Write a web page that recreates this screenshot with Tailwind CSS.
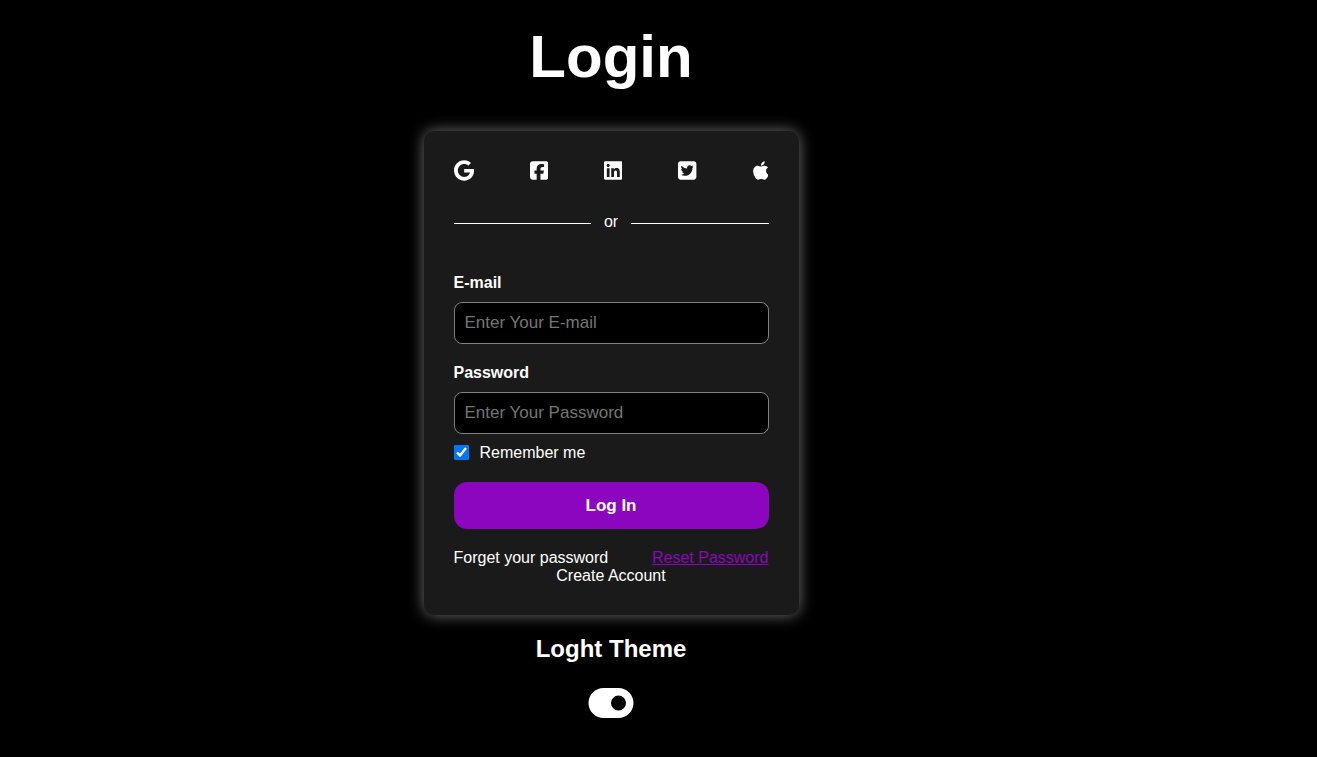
<!DOCTYPE html>
<html lang="en">
<head>
<meta charset="UTF-8">
<meta name="viewport" content="width=device-width, initial-scale=1">
<title>Login</title>
<script src="https://cdn.jsdelivr.net/npm/@tailwindcss/browser@4"></script>
</head>
<body class="min-h-screen bg-black font-['Liberation_Sans',Arial,sans-serif] text-base leading-[18px] text-white">
<main class="flex flex-col items-center pt-[23px] md:pr-[95px]">
  <h1 class="text-[60px] leading-[68px] font-bold">Login</h1>

  <form class="mt-10 w-full max-w-[375px] rounded-[10px] bg-[#1a1a1a] px-[30px] pt-[29px] pb-[30px] shadow-[0_0_15px_#707070]">
    <div class="flex items-center justify-between">
      <a href="#" aria-label="Google"><svg class="h-[21px] w-auto" viewBox="0 0 488 512" fill="currentColor"><path d="M488 261.8C488 403.3 391.1 504 248 504 110.8 504 0 393.2 0 256S110.8 8 248 8c66.8 0 123 24.5 166.3 64.9l-67.5 64.9C258.5 52.6 94.3 116.6 94.3 256c0 86.5 69.1 156.6 153.7 156.6 98.2 0 135-70.4 140.8-106.9H248v-85.3h236.1c2.3 12.7 3.9 24.9 3.9 41.4z"/></svg></a>
      <a href="#" aria-label="Facebook"><svg class="h-[21px] w-auto" viewBox="0 0 448 512" fill="currentColor"><path d="M64 32C28.7 32 0 60.7 0 96V416c0 35.3 28.7 64 64 64h98.2V334.2H109.4V256h52.8V222.3c0-87.1 39.4-127.5 125-127.5c16.2 0 44.2 3.2 55.7 6.4V172c-6-.6-16.5-1-29.6-1c-42 0-58.2 15.9-58.2 57.2V256h83.6l-14.4 78.2H255V480H384c35.3 0 64-28.7 64-64V96c0-35.3-28.7-64-64-64H64z"/></svg></a>
      <a href="#" aria-label="LinkedIn"><svg class="h-[21px] w-auto" viewBox="0 0 448 512" fill="currentColor"><path d="M416 32H31.9C14.3 32 0 46.5 0 64.3v383.4C0 465.5 14.3 480 31.9 480H416c17.6 0 32-14.5 32-32.3V64.3c0-17.8-14.4-32.3-32-32.3zM135.4 416H69V202.2h66.5V416zm-33.2-243c-21.3 0-38.5-17.3-38.5-38.5S80.9 96 102.2 96c21.2 0 38.5 17.3 38.5 38.5 0 21.3-17.2 38.5-38.5 38.5zm282.1 243h-66.4V312c0-24.8-.5-56.7-34.5-56.7-34.6 0-39.9 27-39.9 54.9V416h-66.4V202.2h63.7v29.2h.9c8.9-16.8 30.6-34.5 62.9-34.5 67.2 0 79.7 44.3 79.7 101.9V416z"/></svg></a>
      <a href="#" aria-label="Twitter"><svg class="h-[21px] w-auto" viewBox="0 0 448 512" fill="currentColor"><path d="M64 32C28.7 32 0 60.7 0 96V416c0 35.3 28.7 64 64 64H384c35.3 0 64-28.7 64-64V96c0-35.3-28.7-64-64-64H64zM351.3 199.3v0c0 86.7-66 186.6-186.6 186.6c-37.2 0-71.7-10.8-100.7-29.4c5.3 .6 10.4 .8 15.8 .8c30.7 0 58.9-10.4 81.4-28c-28.8-.6-53-19.5-61.3-45.5c10.1 1.5 19.2 1.5 29.6-1.2c-30-6.1-52.5-32.5-52.5-64.4v-.8c8.7 4.9 18.9 7.9 29.6 8.3c-9-6-16.4-14.1-21.5-23.6s-7.8-20.2-7.7-31c0-12.2 3.2-23.4 8.9-33.1c32.3 39.8 80.8 65.8 135.2 68.6c-9.3-44.5 24-80.6 64-80.6c18.9 0 35.9 7.9 47.9 20.7c14.8-2.8 29-8.3 41.6-15.8c-4.9 15.2-15.2 28-28.8 36.1c13.2-1.4 26-5.1 37.8-10.2c-8.9 13.1-20.1 24.7-32.9 34c.2 2.8 .2 5.7 .2 8.5z"/></svg></a>
      <a href="#" aria-label="Apple"><svg class="h-[21px] w-auto" viewBox="0 0 384 512" fill="currentColor"><path d="M318.7 268.7c-.2-36.7 16.4-64.4 50-84.8-18.8-26.9-47.2-41.7-84.7-44.6-35.5-2.8-74.3 20.7-88.5 20.7-15 0-49.4-19.7-76.4-19.7C63.3 141.2 4 184.8 4 273.5q0 39.3 14.4 81.2c12.8 36.7 59 126.7 107.2 125.2 25.2-.6 43-17.9 75.8-17.9 31.8 0 48.3 17.9 76.4 17.9 48.6-.7 90.4-82.5 102.6-119.3-65.2-30.7-61.7-90-61.7-91.9zm-56.6-164.2c27.3-32.4 24.8-61.9 24-72.5-24.1 1.4-52 16.4-67.9 34.9-17.5 19.8-27.8 44.3-25.6 71.9 26.1 2 49.9-11.4 69.5-34.2z"/></svg></a>
    </div>

    <div class="mt-8 flex items-center gap-[13px]">
      <span class="mt-[3px] h-px flex-1 bg-white"></span>
      <span>or</span>
      <span class="mt-[3px] h-px flex-1 bg-white"></span>
    </div>

    <label for="email" class="mt-[43px] block font-bold">E-mail</label>
    <input id="email" type="email" placeholder="Enter Your E-mail" class="mt-[10px] block h-[42px] w-full rounded-lg border border-[#808080] bg-black px-[10px] text-[17px] placeholder:text-[#757575]">

    <label for="password" class="mt-5 block font-bold">Password</label>
    <input id="password" type="password" placeholder="Enter Your Password" class="mt-[10px] block h-[42px] w-full rounded-lg border border-[#808080] bg-black px-[10px] text-[17px] placeholder:text-[#757575]">

    <div class="mt-[10px] flex items-start gap-[11px]">
      <input id="remember" type="checkbox" checked class="mt-px size-[15px] accent-[#0075ff]">
      <label for="remember">Remember me</label>
    </div>

    <button type="submit" class="mt-5 block h-[47px] w-full rounded-[13px] bg-[#8c05bf] text-[17px] font-bold">Log In</button>

    <div class="mt-5 flex justify-between">
      <span>Forget your password</span>
      <a href="#" class="text-[#8c05bf] underline">Reset Password</a>
    </div>
    <div class="text-center"><a href="#">Create Account</a></div>
  </form>

  <h2 class="mt-5 text-2xl leading-7 font-bold">Loght Theme</h2>
  <button type="button" role="switch" aria-checked="true" aria-label="Theme" class="mt-5">
    <svg class="h-10 w-[46px]" viewBox="0 0 576 512" fill="currentColor"><path d="M192 64C86 64 0 150 0 256S86 448 192 448H384c106 0 192-86 192-192s-86-192-192-192H192zm192 96a96 96 0 1 1 0 192 96 96 0 1 1 0-192z"/></svg>
  </button>
</main>
</body>
</html>
